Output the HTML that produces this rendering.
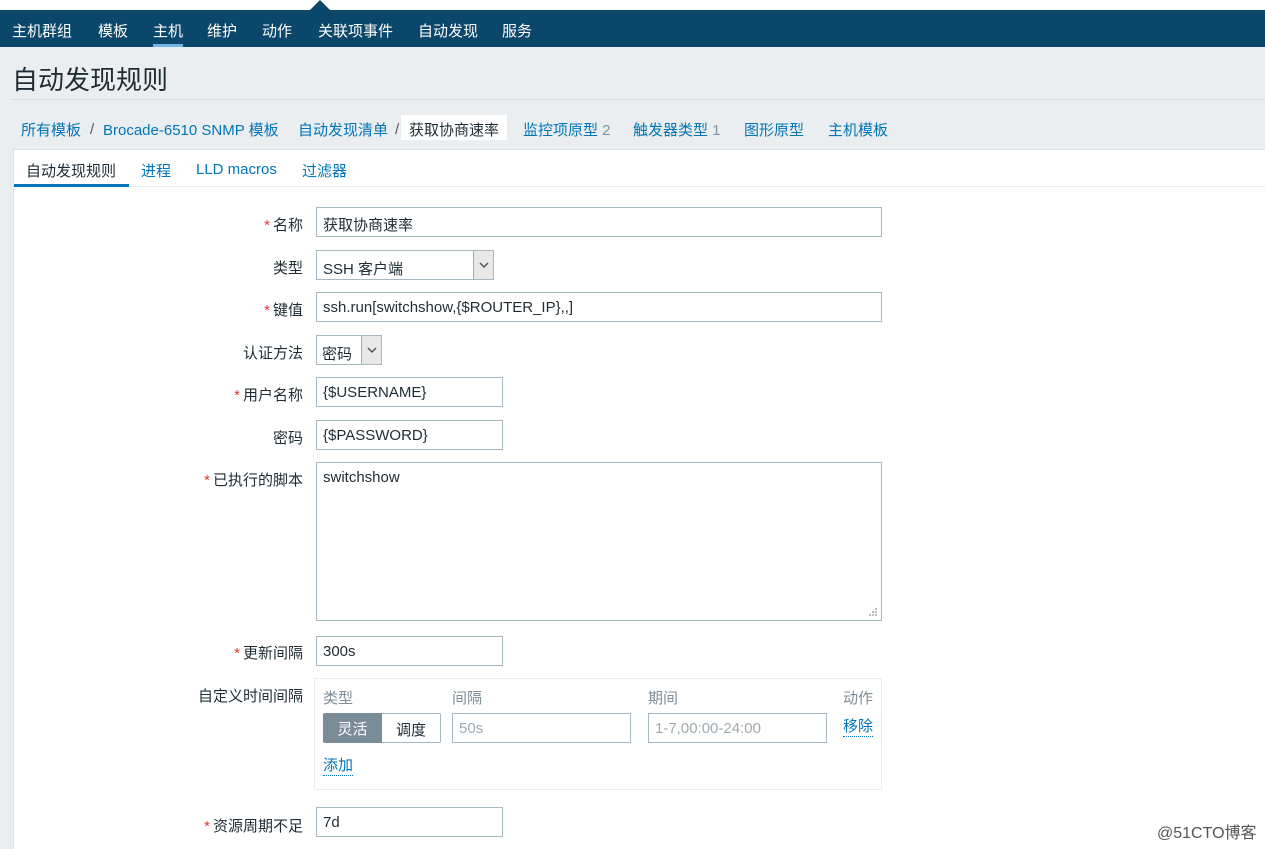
<!DOCTYPE html>
<html><head><meta charset="utf-8"><style>
*{box-sizing:border-box;margin:0;padding:0}
body{width:1265px;height:845px;overflow:hidden;background:#ebeef0;font-family:"Liberation Sans","Noto Sans CJK SC",sans-serif;font-size:15px;color:#1f2c33;position:relative}
.a{position:absolute;white-space:nowrap}
.nav{position:absolute;left:0;top:10px;width:1265px;height:37px;background:#0b466b}
.nav span{position:absolute;top:10px;color:#fff;font-size:15px}
.lnk{color:#0275b8}
.lbl{position:absolute;right:962px;white-space:nowrap;font-size:15px}
.req{color:#e33734;margin-right:3px}
.inp{position:absolute;border:1px solid #a9b7c0;background:#fff;height:30px;padding:6px 6px 0;font-size:15px;white-space:nowrap}
.sel{position:absolute;border:1px solid #a9b7c0;background:#fff;height:30px}
.sel .arr{position:absolute;right:0;top:0;width:20px;height:28px;background:#e8e8e8;border-left:1px solid #aaa}
</style></head><body>
<div style="position:absolute;left:0;top:0;width:1265px;height:10px;background:#fff"></div>
<div class="nav">
<span style="left:12px">主机群组</span><span style="left:98px">模板</span><span style="left:153px">主机</span><span style="left:207px">维护</span><span style="left:262px">动作</span><span style="left:318px">关联项事件</span><span style="left:418px">自动发现</span><span style="left:502px">服务</span>
<div style="position:absolute;left:153px;top:34px;width:30px;height:3px;background:#74b5e6"></div>
</div>
<div style="position:absolute;left:310px;top:0;width:0;height:0;border-left:10px solid transparent;border-right:10px solid transparent;border-bottom:10px solid #0b466b"></div>
<div class="a" style="left:12px;top:60px;font-size:26px;color:#1f2c33">自动发现规则</div>
<div style="position:absolute;left:11px;top:99px;width:1254px;height:1px;background:#d9dde0"></div>
<div class="a lnk" style="left:21px;top:119px">所有模板</div>
<div class="a" style="left:90px;top:121px;color:#555">/</div>
<div class="a lnk" style="left:103px;top:119px">Brocade-6510 SNMP 模板</div>
<div class="a lnk" style="left:298px;top:119px">自动发现清单</div>
<div class="a" style="left:395px;top:121px;color:#555">/</div>
<div style="position:absolute;left:401px;top:115px;width:106px;height:25px;background:#fff"></div>
<div class="a" style="left:409px;top:119px">获取协商速率</div>
<div class="a lnk" style="left:523px;top:119px">监控项原型 <span style="color:#7f93a0">2</span></div>
<div class="a lnk" style="left:633px;top:119px">触发器类型 <span style="color:#7f93a0">1</span></div>
<div class="a lnk" style="left:744px;top:119px">图形原型</div>
<div class="a lnk" style="left:828px;top:119px">主机模板</div>
<div style="position:absolute;left:13px;top:149px;width:1252px;height:700px;background:#fff;border-left:1px solid #dde2e5;border-top:1px solid #dde2e5"></div>
<div style="position:absolute;left:14px;top:186px;width:1251px;height:1px;background:#ebeef0"></div>
<div class="a" style="left:26px;top:160px">自动发现规则</div>
<div style="position:absolute;left:14px;top:184px;width:115px;height:3px;background:#0275b8"></div>
<div class="a lnk" style="left:141px;top:160px">进程</div>
<div class="a lnk" style="left:196px;top:161px">LLD macros</div>
<div class="a lnk" style="left:302px;top:160px">过滤器</div>

<div class="lbl" style="top:214px"><span class="req">*</span>名称</div>
<div class="inp" style="left:316px;top:207px;width:566px">获取协商速率</div>
<div class="lbl" style="top:257px">类型</div>
<div class="sel" style="left:316px;top:250px;width:178px"><span class="a" style="left:6px;top:7px">SSH 客户端</span><div class="arr"><svg width="20" height="28"><path d="M6 12l4 4 4-4" stroke="#555" stroke-width="1.5" fill="none"/></svg></div></div>
<div class="lbl" style="top:299px"><span class="req">*</span>键值</div>
<div class="inp" style="left:316px;top:292px;width:566px">ssh.run[switchshow,{$ROUTER_IP},,]</div>
<div class="lbl" style="top:342px">认证方法</div>
<div class="sel" style="left:316px;top:335px;width:66px"><span class="a" style="left:5px;top:7px">密码</span><div class="arr"><svg width="20" height="28"><path d="M6 12l4 4 4-4" stroke="#555" stroke-width="1.5" fill="none"/></svg></div></div>
<div class="lbl" style="top:384px"><span class="req">*</span>用户名称</div>
<div class="inp" style="left:316px;top:377px;width:187px">{$USERNAME}</div>
<div class="lbl" style="top:427px">密码</div>
<div class="inp" style="left:316px;top:420px;width:187px">{$PASSWORD}</div>
<div class="lbl" style="top:469px"><span class="req">*</span>已执行的脚本</div>
<div class="inp" style="left:316px;top:462px;width:566px;height:159px">switchshow<svg style="position:absolute;right:3px;bottom:3px" width="10" height="10"><g fill="#bbb"><rect x="7" y="1" width="2" height="2"/><rect x="4" y="4" width="2" height="2"/><rect x="7" y="4" width="2" height="2"/><rect x="1" y="7" width="2" height="2"/><rect x="4" y="7" width="2" height="2"/><rect x="7" y="7" width="2" height="2"/></g></svg></div>
<div class="lbl" style="top:642px"><span class="req">*</span>更新间隔</div>
<div class="inp" style="left:316px;top:636px;width:187px">300s</div>
<div class="lbl" style="top:685px">自定义时间间隔</div>
<div style="position:absolute;left:314px;top:678px;width:568px;height:112px;border:1px solid #ebeef0"></div>
<div class="a" style="left:323px;top:687px;color:#7f8d96">类型</div>
<div class="a" style="left:452px;top:687px;color:#7f8d96">间隔</div>
<div class="a" style="left:648px;top:687px;color:#7f8d96">期间</div>
<div class="a" style="left:843px;top:687px;color:#7f8d96">动作</div>
<div style="position:absolute;left:323px;top:713px;width:59px;height:30px;background:#7a8c98;border-radius:2px 0 0 2px;color:#fff;padding-top:5px;text-align:center">灵活</div>
<div style="position:absolute;left:382px;top:713px;width:59px;height:30px;border:1px solid #a9b7c0;border-left:none;border-radius:0 2px 2px 0;text-align:center;padding-top:5px">调度</div>
<div class="inp" style="left:452px;top:713px;width:179px;color:#a0aab0">50s</div>
<div class="inp" style="left:648px;top:713px;width:179px;color:#a0aab0">1-7,00:00-24:00</div>
<div class="a lnk" style="left:843px;top:718px;border-bottom:1px dotted #0275b8;line-height:18px">移除</div>
<div class="a lnk" style="left:323px;top:757px;border-bottom:1px dotted #0275b8;line-height:18px">添加</div>
<div class="lbl" style="top:815px"><span class="req">*</span>资源周期不足</div>
<div class="inp" style="left:316px;top:807px;width:187px">7d</div>
<div class="a" style="left:1157px;top:819px;color:#555;font-size:16px">@51CTO博客</div>
</body></html>
